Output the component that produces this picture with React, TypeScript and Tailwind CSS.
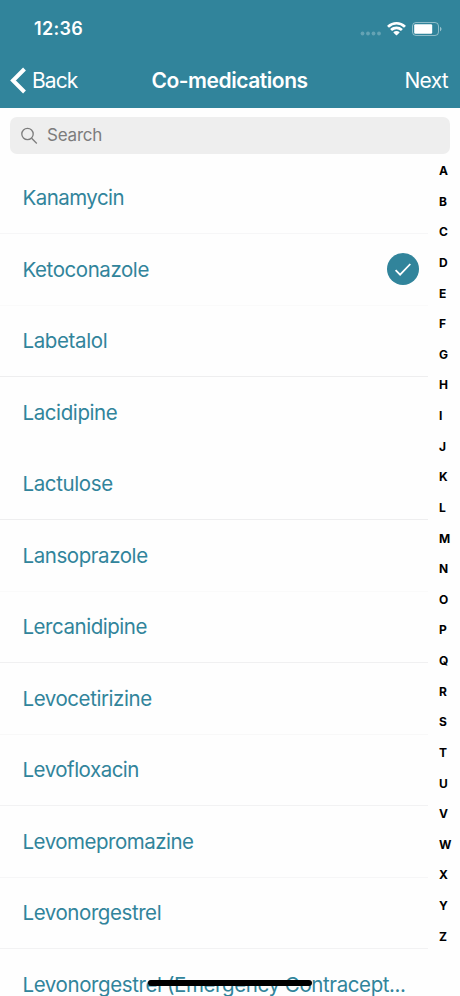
const medications = [
  { name: 'Kanamycin', line: 'border-[#f6f6f7]', tracking: 'tracking-[-0.55px]' },
  { name: 'Ketoconazole', line: 'border-[#fafafa]', tracking: 'tracking-[-0.43px]', selected: true },
  { name: 'Labetalol', line: 'border-[#eeeeef]', tracking: 'tracking-[-0.38px]' },
  { name: 'Lacidipine', line: 'border-transparent', tracking: 'tracking-[-0.4px]' },
  { name: 'Lactulose', line: 'border-[#eeeeef]', tracking: 'tracking-[-0.38px]' },
  { name: 'Lansoprazole', line: 'border-[#fafafa]', tracking: 'tracking-[-0.43px]' },
  { name: 'Lercanidipine', line: 'border-[#f0f0f1]', tracking: 'tracking-[-0.47px]' },
  { name: 'Levocetirizine', line: 'border-[#f8f8f8]', tracking: 'tracking-[-0.43px]' },
  { name: 'Levofloxacin', line: 'border-[#f2f2f3]', tracking: 'tracking-[-0.5px]' },
  { name: 'Levomepromazine', line: 'border-[#f6f6f7]', tracking: 'tracking-[-0.5px]' },
  { name: 'Levonorgestrel', line: 'border-[#f2f2f3]', tracking: 'tracking-[-0.43px]' },
  { name: 'Levonorgestrel (Emergency Contracept...', line: 'border-transparent', tracking: 'tracking-[-0.4px]' },
];

const letters = 'ABCDEFGHIJKLMNOPQRSTUVWXYZ'.split('');

function StatusBar() {
  return (
    <div className="flex h-[57px] items-center justify-between pl-[34px] pr-[18px]">
      <span className="text-[18px] font-semibold leading-none tracking-[0.3px]">12:36</span>
      <div className="flex items-center">
        <svg width="22" height="16" viewBox="0 0 22 16" fill="#fff" fillOpacity="0.25">
          <circle cx="2.5" cy="12.5" r="1.9" />
          <circle cx="8" cy="12.5" r="1.9" />
          <circle cx="13.5" cy="12.5" r="1.9" />
          <circle cx="19" cy="12.5" r="1.9" />
        </svg>
        <svg className="ml-[5px]" width="19" height="14" viewBox="0 0 19 14" fill="#fff">
          <path d="M9.5 0C6 0 2.8 1.3.4 3.6c-.2.2-.2.4 0 .6l1.3 1.3c.2.2.4.2.6 0a10.4 10.4 0 0 1 14.4 0c.2.2.4.2.6 0l1.3-1.3c.2-.2.2-.4 0-.6A13.1 13.1 0 0 0 9.5 0z" />
          <path d="M9.5 4.5c-2.3 0-4.4.9-6 2.3-.2.2-.2.5 0 .7l1.3 1.3c.2.2.4.2.6 0a6.1 6.1 0 0 1 8.2 0c.2.2.4.2.6 0l1.3-1.3c.2-.2.2-.5 0-.7a8.9 8.9 0 0 0-6-2.3z" />
          <path d="M9.5 9c-1.1 0-2.1.4-2.9 1.1-.2.2-.2.4 0 .6l2.6 2.6c.2.2.4.2.6 0l2.6-2.6c.2-.2.2-.4 0-.6A4.3 4.3 0 0 0 9.5 9z" />
        </svg>
        <svg className="ml-[6px]" width="30" height="14" viewBox="0 0 30 14">
          <rect x="0.5" y="0.5" width="26" height="13" rx="3.5" fill="none" stroke="#fff" strokeOpacity="0.45" />
          <rect x="2.2" y="2.2" width="18" height="9.6" rx="1.2" fill="#fff" />
          <path d="M28 4.7v4.6c.9-.4 1.5-1.3 1.5-2.3S28.9 5.1 28 4.7z" fill="#fff" fillOpacity="0.5" />
        </svg>
      </div>
    </div>
  );
}

function NavBar() {
  return (
    <div className="grid h-[51px] grid-cols-[1fr_auto_1fr] items-center pb-[4px] pl-[10px] pr-[12px] text-[21px] leading-none">
      <div className="flex items-center gap-[6px]">
        <svg width="16" height="27" viewBox="0 0 16 27" fill="none" stroke="#fff" strokeWidth="4">
          <path d="M14.5 2 3 13.5 14.5 25" />
        </svg>
        <span className="tracking-[-0.9px]">Back</span>
      </div>
      <h1 className="pl-px font-semibold tracking-[-0.45px]">Co-medications</h1>
      <span className="text-right tracking-[-0.7px]">Next</span>
    </div>
  );
}

function SearchField() {
  return (
    <div className="px-[10px] pt-[9px]">
      <div className="flex h-[37px] items-center gap-[9px] rounded-[7px] bg-[#eeeeee] pl-[10px] text-[#7c7c7c]">
        <svg width="18" height="18" viewBox="0 0 18 18" fill="none" stroke="currentColor" strokeWidth="1.3">
          <circle cx="7.5" cy="7" r="5.7" />
          <path d="m11.6 11.2 5.2 5.3" />
        </svg>
        <span className="text-[17px] leading-none tracking-[-0.2px]">Search</span>
      </div>
    </div>
  );
}

function CheckBadge() {
  return (
    <svg className="mr-[9px] shrink-0" width="32" height="32" viewBox="0 0 32 32" fill="none">
      <circle cx="16" cy="16" r="16" fill="#31849b" />
      <path d="m8.6 17.2 4.5 4.5L23.3 11" stroke="#fff" strokeWidth="1.8" />
    </svg>
  );
}

export default function App() {
  return (
    <div className="relative flex h-[996px] w-[460px] flex-col overflow-hidden bg-[#fefefe] font-['Inter',sans-serif]">
      <header className="shrink-0 bg-[#31849b] text-white">
        <StatusBar />
        <NavBar />
      </header>
      <SearchField />
      <main className="flex min-h-0 flex-1">
        <ul className="w-[428px] shrink-0 pt-[8.5px]">
          {medications.map((med) => (
            <li
              key={med.name}
              className={`flex h-[71.5px] items-center justify-between border-b pl-[22.5px] text-[20.5px] text-[#31849b] ${med.line}`}
            >
              <span className={`whitespace-nowrap pt-[2px] ${med.tracking}`}>{med.name}</span>
              {med.selected && <CheckBadge />}
            </li>
          ))}
        </ul>
        <nav className="flex flex-col pl-[11px] pt-[1.8px]">
          {letters.map((letter) => (
            <span key={letter} className="flex h-[30.64px] items-center text-[12px] font-bold leading-none text-black">
              {letter}
            </span>
          ))}
        </nav>
      </main>
      <div className="absolute bottom-[10px] left-[148px] h-[6px] w-[164px] rounded-full bg-black" />
    </div>
  );
}
